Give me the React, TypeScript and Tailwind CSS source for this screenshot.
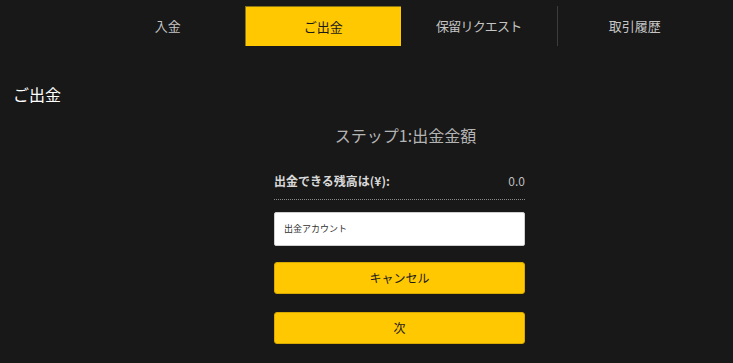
import React from "react";

const font = { fontFamily: '"Noto Sans CJK JP", "Noto Sans", sans-serif' };

export default function App() {
  return (
    <div
      className="w-[733px] h-[363px] bg-[#181818] overflow-hidden flex flex-col"
      style={font}
    >
      <nav className="mt-[6px] ml-[90px] w-[622px] h-[40px] grid grid-cols-4 text-[13px] text-[#c4c4c4]">
        <div className="flex items-center justify-center">入金</div>
        <div className="-ml-[1px] flex items-center justify-center bg-[#ffc800] text-[#1a1a1a] border-t border-l border-[#8c7414]">
          ご出金
        </div>
        <div className="flex items-center justify-center tracking-[-0.8px]">保留リクエスト</div>
        <div className="flex items-center justify-center border-l border-[#3c3c3c]">
          取引履歴
        </div>
      </nav>

      <h1 className="mt-[38px] ml-[13px] text-[16px] leading-[20px] text-white">
        ご出金
      </h1>

      <div className="mt-[20px] w-[251px] ml-[274px] flex flex-col">
        <h2 className="text-center text-[16px] leading-[22px] text-[#b4b4b4] ml-[12px]">
          ステップ1:出金金額
        </h2>

        <div className="mt-[26px] flex items-center justify-between h-[18px] text-[12px] text-[#d8d8d8]">
          <span className="font-bold">出金できる残高は(¥):</span>
          <span className="text-[#bdbdbd]">0.0</span>
        </div>
        <div className="mt-[9px] border-t border-dotted border-[#8a8a8a]" />

        <div className="mt-[12px] h-[34px] bg-white rounded-[2px] border border-[#cfcfcf] flex items-center pl-[9px] text-[9px] text-[#333]">
          出金アカウント
        </div>

        <button className="mt-[16px] h-[32px] bg-[#ffc800] rounded-[3px] border border-[#d8a900] text-[12px] text-[#1a1a1a]">
          キャンセル
        </button>

        <button className="mt-[18px] h-[32px] bg-[#ffc800] rounded-[3px] border border-[#d8a900] text-[12px] text-[#1a1a1a]">
          次
        </button>
      </div>
    </div>
  );
}
